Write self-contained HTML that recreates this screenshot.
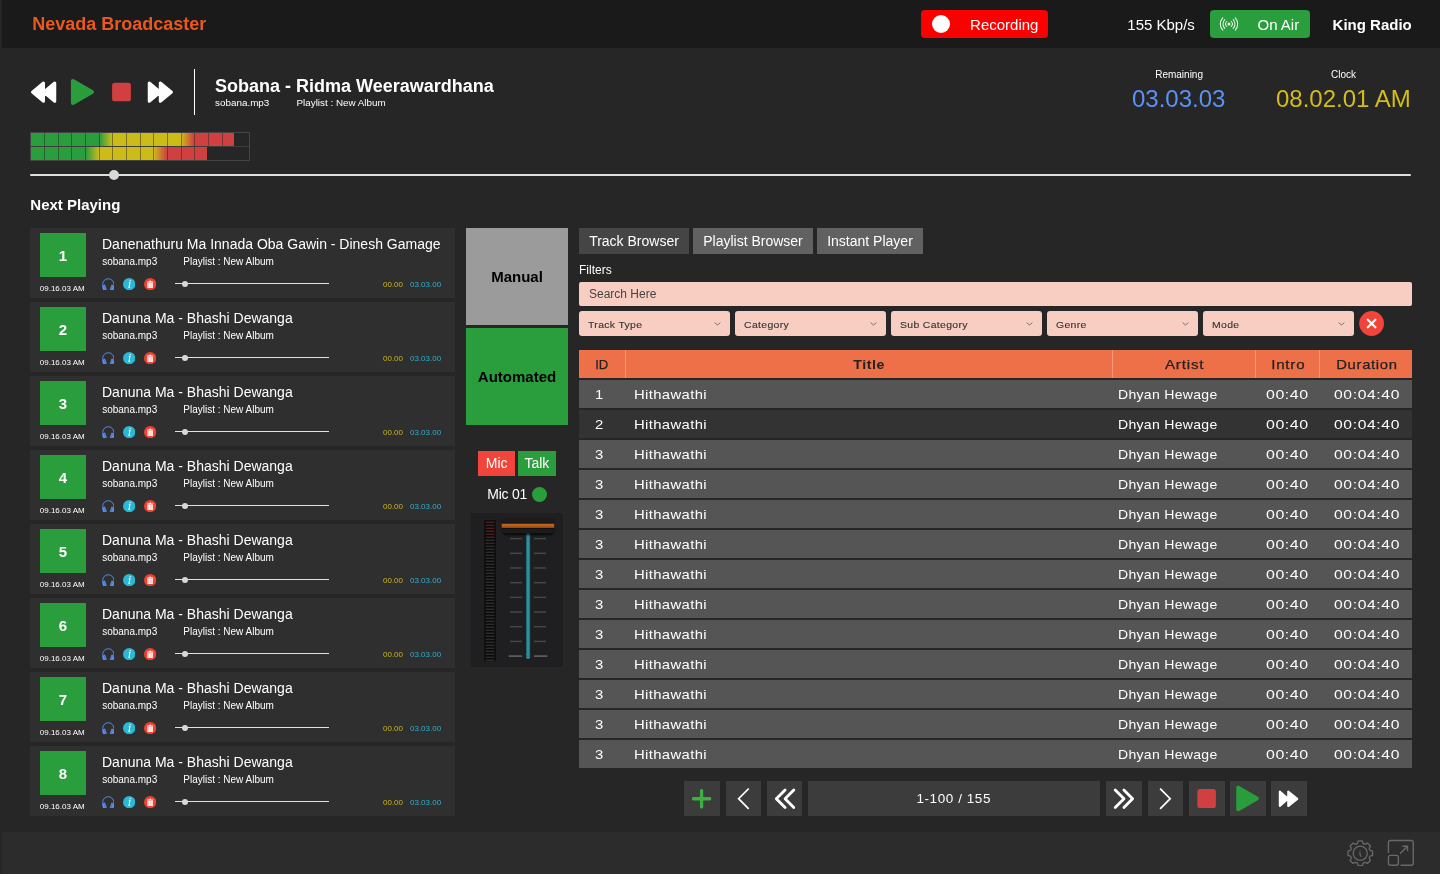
<!DOCTYPE html>
<html><head><meta charset="utf-8"><title>Nevada Broadcaster</title><style>
*{box-sizing:border-box;margin:0;padding:0}
html,body{width:1440px;height:874px;overflow:hidden;background:#262626;font-family:"Liberation Sans",sans-serif;color:#fff}
#app{position:absolute;left:0;top:0;width:1440px;height:874px;will-change:transform}
.abs{position:absolute}
#hdr{position:absolute;left:2px;top:0;width:1438px;height:48px;background:#1a1a1a}
#ftr{position:absolute;left:2px;top:832px;width:1438px;height:42px;background:#2c2c2c}
.t{position:absolute;white-space:nowrap;line-height:1}
.card{position:absolute;left:30px;width:425px;height:70px;background:#2f2f2f}
.num{position:absolute;left:9.800px;top:5px;width:46.300px;height:44px;background:#2a9d3c;color:#fff;font-weight:bold;font-size:15px;text-align:center;line-height:45.500px}
.tab{position:absolute;top:228px;height:26px;font-size:14px;line-height:26px;text-align:center;color:#fff}
.dd{position:absolute;top:311.100px;width:151px;height:24.800px;background:#f9cec2;border-radius:3px}
.row{position:absolute;left:579px;width:833px;height:28px;background:#555;font-size:13.500px;line-height:30.200px;color:#fff}
.row span{position:absolute;top:0;white-space:nowrap}
.pb{position:absolute;top:781px;width:35px;height:34.900px;background:#3c3c3c}
</style></head><body><div id="app">
<div id="hdr"></div>
<div class="t" style="left:32.20px;top:15.26px;font-size:18px;font-weight:bold;color:#e9581f">Nevada Broadcaster</div>
<div class="abs" style="left:921.200px;top:10px;width:127.300px;height:28px;background:#fb0000;border-radius:4px"></div>
<div class="abs" style="left:931.800px;top:15px;width:18px;height:18px;background:#fff;border-radius:50%"></div>
<div class="t" style="left:970.10px;top:17.30px;font-size:15px;">Recording</div>
<div class="t" style="left:1127.30px;top:16.80px;font-size:15px;">155 Kbp/s</div>
<div class="abs" style="left:1209.5px;top:10px;width:100px;height:28px;background:#2a9d3c;border-radius:4px"></div>
<svg class="abs" style="left:1218.6px;top:15px" width="20" height="18" viewBox="1 0 20 18" fill="none" stroke="#e6f4e8" stroke-width="1.05" stroke-linecap="round"><circle cx="11" cy="9" r="1.5" fill="#f2faf3" stroke="none"/><path d="M8.7 6.5a3.6 3.6 0 0 0 0 5M13.3 6.5a3.6 3.6 0 0 1 0 5M6.8 4.6a6.3 6.3 0 0 0 0 8.800M15.2 4.6a6.3 6.3 0 0 1 0 8.800M4.8 2.800a9 9 0 0 0 0 12.400M17.2 2.800a9 9 0 0 1 0 12.400"/></svg>
<div class="t" style="left:1257.50px;top:16.80px;font-size:15px;">On Air</div>
<div class="t" style="left:1332.60px;top:16.80px;font-size:15px;font-weight:bold">King Radio</div>
<svg class="abs" style="left:28px;top:76px" width="150" height="32" viewBox="28 76 150 32"><path d="M43.5 83 L43.5 101.250 L32.500 92.100 Z M54.750 83 L54.750 101.250 L43.700 92.100 Z" fill="#fff" stroke="#fff" stroke-width="3" stroke-linejoin="round"/><path d="M72.9 81 L72.9 103 L92 92 Z" fill="#2a9d3c" stroke="#2a9d3c" stroke-width="4" stroke-linejoin="round"/><rect x="112.100" y="82.750" width="18.800" height="18.500" rx="2.600" fill="#d04040"/><path d="M149.250 83 L149.250 101.250 L160.300 92.100 Z M160.300 83 L160.300 101.250 L171.500 92.100 Z" fill="#fff" stroke="#fff" stroke-width="3" stroke-linejoin="round"/></svg>
<div class="abs" style="left:193.750px;top:69px;width:1.300px;height:46px;background:#fff"></div>
<div class="t" style="left:215.00px;top:77.26px;font-size:18px;font-weight:bold">Sobana - Ridma Weerawardhana</div>
<div class="t" style="left:215.00px;top:98.12px;font-size:9.9px;">sobana.mp3</div>
<div class="t" style="left:296.50px;top:98.16px;font-size:9.85px;">Playlist : New Album</div>
<div class="t" style="left:979.10px;top:69.53px;width:400px;text-align:center;font-size:10px;">Remaining</div>
<div class="t" style="left:1132.00px;top:86.68px;font-size:24px;color:#5b92f5">03.03.03</div>
<div class="t" style="left:1143.50px;top:69.53px;width:400px;text-align:center;font-size:10px;">Clock</div>
<div class="t" style="left:1276.00px;top:86.68px;font-size:24px;color:#d4bc1a">08.02.01 AM</div>
<div class="abs" id="vu" style="left:30.2px;top:132.2px;width:220px;height:28.500px;border:1px solid #454545"></div>
<div class="abs" style="left:31px;top:133px;width:203px;height:13.300px;background:linear-gradient(90deg,#2a9d3c 0,#2a9d3c 68.5px,#cdbb1a 81px,#cdbb1a 150px,#d04040 163px,#d04040 100%)"></div>
<div class="abs" style="left:31px;top:147px;width:176px;height:13px;background:linear-gradient(90deg,#2a9d3c 0,#2a9d3c 55px,#cdbb1a 68px,#cdbb1a 122.500px,#d04040 136px,#d04040 100%)"></div>
<div class="abs" style="left:31px;top:146.200px;width:218.400px;height:1px;background:#3c3c3c"></div>
<div class="abs" style="left:43.87px;top:133px;width:1px;height:13.200px;background:rgba(30,30,30,.45)"></div>
<div class="abs" style="left:57.54px;top:133px;width:1px;height:13.200px;background:rgba(30,30,30,.45)"></div>
<div class="abs" style="left:71.21px;top:133px;width:1px;height:13.200px;background:rgba(30,30,30,.45)"></div>
<div class="abs" style="left:84.88px;top:133px;width:1px;height:13.200px;background:rgba(30,30,30,.45)"></div>
<div class="abs" style="left:98.55px;top:133px;width:1px;height:13.200px;background:rgba(30,30,30,.45)"></div>
<div class="abs" style="left:112.22px;top:133px;width:1px;height:13.200px;background:rgba(30,30,30,.45)"></div>
<div class="abs" style="left:125.89px;top:133px;width:1px;height:13.200px;background:rgba(30,30,30,.45)"></div>
<div class="abs" style="left:139.56px;top:133px;width:1px;height:13.200px;background:rgba(30,30,30,.45)"></div>
<div class="abs" style="left:153.23px;top:133px;width:1px;height:13.200px;background:rgba(30,30,30,.45)"></div>
<div class="abs" style="left:166.90px;top:133px;width:1px;height:13.200px;background:rgba(30,30,30,.45)"></div>
<div class="abs" style="left:180.57px;top:133px;width:1px;height:13.200px;background:rgba(30,30,30,.45)"></div>
<div class="abs" style="left:194.24px;top:133px;width:1px;height:13.200px;background:rgba(30,30,30,.45)"></div>
<div class="abs" style="left:207.91px;top:133px;width:1px;height:13.200px;background:rgba(30,30,30,.45)"></div>
<div class="abs" style="left:221.58px;top:133px;width:1px;height:13.200px;background:rgba(30,30,30,.45)"></div>
<div class="abs" style="left:43.87px;top:147px;width:1px;height:13px;background:rgba(30,30,30,.45)"></div>
<div class="abs" style="left:57.54px;top:147px;width:1px;height:13px;background:rgba(30,30,30,.45)"></div>
<div class="abs" style="left:71.21px;top:147px;width:1px;height:13px;background:rgba(30,30,30,.45)"></div>
<div class="abs" style="left:84.88px;top:147px;width:1px;height:13px;background:rgba(30,30,30,.45)"></div>
<div class="abs" style="left:98.55px;top:147px;width:1px;height:13px;background:rgba(30,30,30,.45)"></div>
<div class="abs" style="left:112.22px;top:147px;width:1px;height:13px;background:rgba(30,30,30,.45)"></div>
<div class="abs" style="left:125.89px;top:147px;width:1px;height:13px;background:rgba(30,30,30,.45)"></div>
<div class="abs" style="left:139.56px;top:147px;width:1px;height:13px;background:rgba(30,30,30,.45)"></div>
<div class="abs" style="left:153.23px;top:147px;width:1px;height:13px;background:rgba(30,30,30,.45)"></div>
<div class="abs" style="left:166.90px;top:147px;width:1px;height:13px;background:rgba(30,30,30,.45)"></div>
<div class="abs" style="left:180.57px;top:147px;width:1px;height:13px;background:rgba(30,30,30,.45)"></div>
<div class="abs" style="left:194.24px;top:147px;width:1px;height:13px;background:rgba(30,30,30,.45)"></div>
<div class="abs" style="left:30.300px;top:173.800px;width:1381px;height:2.400px;background:#e0e0e0;border-radius:1px"></div>
<div class="abs" style="left:109px;top:170px;width:10px;height:10px;border-radius:50%;background:#d9d9d9"></div>
<div class="t" style="left:30.30px;top:197.30px;font-size:15px;font-weight:bold">Next Playing</div>
<div class="card" style="top:228px">
<div class="num">1</div>
<div class="t" style="left:9.80px;top:57.03px;font-size:8px;">09.16.03 AM</div>
<div class="t" style="left:72.00px;top:9.35px;font-size:14px;">Danenathuru Ma Innada Oba Gawin - Dinesh Gamage</div>
<div class="t" style="left:72.20px;top:29.14px;font-size:10px;">sobana.mp3</div>
<div class="t" style="left:153.30px;top:29.14px;font-size:10px;">Playlist : New Album</div>
<svg class="abs" style="left:71.700px;top:49.700px" width="12.600" height="12.600" viewBox="0 0 12.600 12.600" fill="none"><path d="M.75 9V6.300a5.550 5.550 0 0 1 11.100 0V9" stroke="#5b8def" stroke-width=".950"/><path d="M.5 8.500Q1.400 6.700 2.900 6.600L4.800 11.300Q3.500 12.900 1.200 12.300Q.3 10.500 .5 8.500Z" fill="#5b8def"/><path d="M12.100 8.500Q11.200 6.700 9.700 6.600L7.800 11.300Q9.100 12.900 11.400 12.300Q12.300 10.500 12.100 8.500Z" fill="#5b8def"/><path d="M2.300 8.300L3.400 11.300M10.300 8.300L9.200 11.300" stroke="#3e6bc8" stroke-width=".7" stroke-linecap="round"/></svg><svg class="abs" style="left:92.800px;top:49.800px" width="12.400" height="12.400" viewBox="0 0 12.400 12.400"><circle cx="6.200" cy="6.200" r="6.150" fill="#29b8d6"/><text x="6.500" y="10.300" font-family="Liberation Serif" font-style="italic" font-size="12.500" fill="#fff" text-anchor="middle">i</text></svg><svg class="abs" style="left:113.900px;top:49.800px" width="12.400" height="12.400" viewBox="0 0 12.400 12.400"><circle cx="6.200" cy="6.200" r="6.150" fill="#f04030"/><path d="M3.100 4.200V3.500h2.300l.3-.9h1l.3.900h2.300v.7z" fill="#fff"/><path d="M3.300 4.500h5.800l-.2 5.500H3.500z" fill="#fff"/><path d="M4.400 5v4.300M6.200 5v4.300M8 5v4.300" stroke="#f04030" stroke-opacity=".55" stroke-width=".6"/></svg>
<div class="abs" style="left:145px;top:54.800px;width:154px;height:1.200px;background:#e0e0e0"></div>
<div class="abs" style="left:151.500px;top:52.700px;width:6.500px;height:6.500px;border-radius:50%;background:#d8d8d8"></div>
<div class="t" style="left:353.00px;top:52.53px;font-size:8px;color:#c6b621">00.00</div>
<div class="t" style="left:380.00px;top:52.53px;font-size:8px;color:#34adc9">03.03.00</div>
</div>
<div class="card" style="top:302px">
<div class="num">2</div>
<div class="t" style="left:9.80px;top:57.03px;font-size:8px;">09.16.03 AM</div>
<div class="t" style="left:72.00px;top:9.35px;font-size:14px;">Danuna Ma - Bhashi Dewanga</div>
<div class="t" style="left:72.20px;top:29.14px;font-size:10px;">sobana.mp3</div>
<div class="t" style="left:153.30px;top:29.14px;font-size:10px;">Playlist : New Album</div>
<svg class="abs" style="left:71.700px;top:49.700px" width="12.600" height="12.600" viewBox="0 0 12.600 12.600" fill="none"><path d="M.75 9V6.300a5.550 5.550 0 0 1 11.100 0V9" stroke="#5b8def" stroke-width=".950"/><path d="M.5 8.500Q1.400 6.700 2.900 6.600L4.800 11.300Q3.500 12.900 1.200 12.300Q.3 10.500 .5 8.500Z" fill="#5b8def"/><path d="M12.100 8.500Q11.200 6.700 9.700 6.600L7.800 11.300Q9.100 12.900 11.400 12.300Q12.300 10.500 12.100 8.500Z" fill="#5b8def"/><path d="M2.300 8.300L3.400 11.300M10.300 8.300L9.200 11.300" stroke="#3e6bc8" stroke-width=".7" stroke-linecap="round"/></svg><svg class="abs" style="left:92.800px;top:49.800px" width="12.400" height="12.400" viewBox="0 0 12.400 12.400"><circle cx="6.200" cy="6.200" r="6.150" fill="#29b8d6"/><text x="6.500" y="10.300" font-family="Liberation Serif" font-style="italic" font-size="12.500" fill="#fff" text-anchor="middle">i</text></svg><svg class="abs" style="left:113.900px;top:49.800px" width="12.400" height="12.400" viewBox="0 0 12.400 12.400"><circle cx="6.200" cy="6.200" r="6.150" fill="#f04030"/><path d="M3.100 4.200V3.500h2.300l.3-.9h1l.3.900h2.300v.7z" fill="#fff"/><path d="M3.300 4.500h5.800l-.2 5.500H3.500z" fill="#fff"/><path d="M4.400 5v4.300M6.200 5v4.300M8 5v4.300" stroke="#f04030" stroke-opacity=".55" stroke-width=".6"/></svg>
<div class="abs" style="left:145px;top:54.800px;width:154px;height:1.200px;background:#e0e0e0"></div>
<div class="abs" style="left:151.500px;top:52.700px;width:6.500px;height:6.500px;border-radius:50%;background:#d8d8d8"></div>
<div class="t" style="left:353.00px;top:52.53px;font-size:8px;color:#c6b621">00.00</div>
<div class="t" style="left:380.00px;top:52.53px;font-size:8px;color:#34adc9">03.03.00</div>
</div>
<div class="card" style="top:376px">
<div class="num">3</div>
<div class="t" style="left:9.80px;top:57.03px;font-size:8px;">09.16.03 AM</div>
<div class="t" style="left:72.00px;top:9.35px;font-size:14px;">Danuna Ma - Bhashi Dewanga</div>
<div class="t" style="left:72.20px;top:29.14px;font-size:10px;">sobana.mp3</div>
<div class="t" style="left:153.30px;top:29.14px;font-size:10px;">Playlist : New Album</div>
<svg class="abs" style="left:71.700px;top:49.700px" width="12.600" height="12.600" viewBox="0 0 12.600 12.600" fill="none"><path d="M.75 9V6.300a5.550 5.550 0 0 1 11.100 0V9" stroke="#5b8def" stroke-width=".950"/><path d="M.5 8.500Q1.400 6.700 2.900 6.600L4.800 11.300Q3.500 12.900 1.200 12.300Q.3 10.500 .5 8.500Z" fill="#5b8def"/><path d="M12.100 8.500Q11.200 6.700 9.700 6.600L7.800 11.300Q9.100 12.900 11.400 12.300Q12.300 10.500 12.100 8.500Z" fill="#5b8def"/><path d="M2.300 8.300L3.400 11.300M10.300 8.300L9.200 11.300" stroke="#3e6bc8" stroke-width=".7" stroke-linecap="round"/></svg><svg class="abs" style="left:92.800px;top:49.800px" width="12.400" height="12.400" viewBox="0 0 12.400 12.400"><circle cx="6.200" cy="6.200" r="6.150" fill="#29b8d6"/><text x="6.500" y="10.300" font-family="Liberation Serif" font-style="italic" font-size="12.500" fill="#fff" text-anchor="middle">i</text></svg><svg class="abs" style="left:113.900px;top:49.800px" width="12.400" height="12.400" viewBox="0 0 12.400 12.400"><circle cx="6.200" cy="6.200" r="6.150" fill="#f04030"/><path d="M3.100 4.200V3.500h2.300l.3-.9h1l.3.900h2.300v.7z" fill="#fff"/><path d="M3.300 4.500h5.800l-.2 5.500H3.500z" fill="#fff"/><path d="M4.400 5v4.300M6.200 5v4.300M8 5v4.300" stroke="#f04030" stroke-opacity=".55" stroke-width=".6"/></svg>
<div class="abs" style="left:145px;top:54.800px;width:154px;height:1.200px;background:#e0e0e0"></div>
<div class="abs" style="left:151.500px;top:52.700px;width:6.500px;height:6.500px;border-radius:50%;background:#d8d8d8"></div>
<div class="t" style="left:353.00px;top:52.53px;font-size:8px;color:#c6b621">00.00</div>
<div class="t" style="left:380.00px;top:52.53px;font-size:8px;color:#34adc9">03.03.00</div>
</div>
<div class="card" style="top:450px">
<div class="num">4</div>
<div class="t" style="left:9.80px;top:57.03px;font-size:8px;">09.16.03 AM</div>
<div class="t" style="left:72.00px;top:9.35px;font-size:14px;">Danuna Ma - Bhashi Dewanga</div>
<div class="t" style="left:72.20px;top:29.14px;font-size:10px;">sobana.mp3</div>
<div class="t" style="left:153.30px;top:29.14px;font-size:10px;">Playlist : New Album</div>
<svg class="abs" style="left:71.700px;top:49.700px" width="12.600" height="12.600" viewBox="0 0 12.600 12.600" fill="none"><path d="M.75 9V6.300a5.550 5.550 0 0 1 11.100 0V9" stroke="#5b8def" stroke-width=".950"/><path d="M.5 8.500Q1.400 6.700 2.900 6.600L4.800 11.300Q3.500 12.900 1.200 12.300Q.3 10.500 .5 8.500Z" fill="#5b8def"/><path d="M12.100 8.500Q11.200 6.700 9.700 6.600L7.800 11.300Q9.100 12.900 11.400 12.300Q12.300 10.500 12.100 8.500Z" fill="#5b8def"/><path d="M2.300 8.300L3.400 11.300M10.300 8.300L9.200 11.300" stroke="#3e6bc8" stroke-width=".7" stroke-linecap="round"/></svg><svg class="abs" style="left:92.800px;top:49.800px" width="12.400" height="12.400" viewBox="0 0 12.400 12.400"><circle cx="6.200" cy="6.200" r="6.150" fill="#29b8d6"/><text x="6.500" y="10.300" font-family="Liberation Serif" font-style="italic" font-size="12.500" fill="#fff" text-anchor="middle">i</text></svg><svg class="abs" style="left:113.900px;top:49.800px" width="12.400" height="12.400" viewBox="0 0 12.400 12.400"><circle cx="6.200" cy="6.200" r="6.150" fill="#f04030"/><path d="M3.100 4.200V3.500h2.300l.3-.9h1l.3.900h2.300v.7z" fill="#fff"/><path d="M3.300 4.500h5.800l-.2 5.500H3.500z" fill="#fff"/><path d="M4.400 5v4.300M6.200 5v4.300M8 5v4.300" stroke="#f04030" stroke-opacity=".55" stroke-width=".6"/></svg>
<div class="abs" style="left:145px;top:54.800px;width:154px;height:1.200px;background:#e0e0e0"></div>
<div class="abs" style="left:151.500px;top:52.700px;width:6.500px;height:6.500px;border-radius:50%;background:#d8d8d8"></div>
<div class="t" style="left:353.00px;top:52.53px;font-size:8px;color:#c6b621">00.00</div>
<div class="t" style="left:380.00px;top:52.53px;font-size:8px;color:#34adc9">03.03.00</div>
</div>
<div class="card" style="top:524px">
<div class="num">5</div>
<div class="t" style="left:9.80px;top:57.03px;font-size:8px;">09.16.03 AM</div>
<div class="t" style="left:72.00px;top:9.35px;font-size:14px;">Danuna Ma - Bhashi Dewanga</div>
<div class="t" style="left:72.20px;top:29.14px;font-size:10px;">sobana.mp3</div>
<div class="t" style="left:153.30px;top:29.14px;font-size:10px;">Playlist : New Album</div>
<svg class="abs" style="left:71.700px;top:49.700px" width="12.600" height="12.600" viewBox="0 0 12.600 12.600" fill="none"><path d="M.75 9V6.300a5.550 5.550 0 0 1 11.100 0V9" stroke="#5b8def" stroke-width=".950"/><path d="M.5 8.500Q1.400 6.700 2.900 6.600L4.800 11.300Q3.500 12.900 1.200 12.300Q.3 10.500 .5 8.500Z" fill="#5b8def"/><path d="M12.100 8.500Q11.200 6.700 9.700 6.600L7.800 11.300Q9.100 12.900 11.400 12.300Q12.300 10.500 12.100 8.500Z" fill="#5b8def"/><path d="M2.300 8.300L3.400 11.300M10.300 8.300L9.200 11.300" stroke="#3e6bc8" stroke-width=".7" stroke-linecap="round"/></svg><svg class="abs" style="left:92.800px;top:49.800px" width="12.400" height="12.400" viewBox="0 0 12.400 12.400"><circle cx="6.200" cy="6.200" r="6.150" fill="#29b8d6"/><text x="6.500" y="10.300" font-family="Liberation Serif" font-style="italic" font-size="12.500" fill="#fff" text-anchor="middle">i</text></svg><svg class="abs" style="left:113.900px;top:49.800px" width="12.400" height="12.400" viewBox="0 0 12.400 12.400"><circle cx="6.200" cy="6.200" r="6.150" fill="#f04030"/><path d="M3.100 4.200V3.500h2.300l.3-.9h1l.3.900h2.300v.7z" fill="#fff"/><path d="M3.300 4.500h5.800l-.2 5.500H3.500z" fill="#fff"/><path d="M4.400 5v4.300M6.200 5v4.300M8 5v4.300" stroke="#f04030" stroke-opacity=".55" stroke-width=".6"/></svg>
<div class="abs" style="left:145px;top:54.800px;width:154px;height:1.200px;background:#e0e0e0"></div>
<div class="abs" style="left:151.500px;top:52.700px;width:6.500px;height:6.500px;border-radius:50%;background:#d8d8d8"></div>
<div class="t" style="left:353.00px;top:52.53px;font-size:8px;color:#c6b621">00.00</div>
<div class="t" style="left:380.00px;top:52.53px;font-size:8px;color:#34adc9">03.03.00</div>
</div>
<div class="card" style="top:598px">
<div class="num">6</div>
<div class="t" style="left:9.80px;top:57.03px;font-size:8px;">09.16.03 AM</div>
<div class="t" style="left:72.00px;top:9.35px;font-size:14px;">Danuna Ma - Bhashi Dewanga</div>
<div class="t" style="left:72.20px;top:29.14px;font-size:10px;">sobana.mp3</div>
<div class="t" style="left:153.30px;top:29.14px;font-size:10px;">Playlist : New Album</div>
<svg class="abs" style="left:71.700px;top:49.700px" width="12.600" height="12.600" viewBox="0 0 12.600 12.600" fill="none"><path d="M.75 9V6.300a5.550 5.550 0 0 1 11.100 0V9" stroke="#5b8def" stroke-width=".950"/><path d="M.5 8.500Q1.400 6.700 2.900 6.600L4.800 11.300Q3.500 12.900 1.200 12.300Q.3 10.500 .5 8.500Z" fill="#5b8def"/><path d="M12.100 8.500Q11.200 6.700 9.700 6.600L7.800 11.300Q9.100 12.900 11.400 12.300Q12.300 10.500 12.100 8.500Z" fill="#5b8def"/><path d="M2.300 8.300L3.400 11.300M10.300 8.300L9.200 11.300" stroke="#3e6bc8" stroke-width=".7" stroke-linecap="round"/></svg><svg class="abs" style="left:92.800px;top:49.800px" width="12.400" height="12.400" viewBox="0 0 12.400 12.400"><circle cx="6.200" cy="6.200" r="6.150" fill="#29b8d6"/><text x="6.500" y="10.300" font-family="Liberation Serif" font-style="italic" font-size="12.500" fill="#fff" text-anchor="middle">i</text></svg><svg class="abs" style="left:113.900px;top:49.800px" width="12.400" height="12.400" viewBox="0 0 12.400 12.400"><circle cx="6.200" cy="6.200" r="6.150" fill="#f04030"/><path d="M3.100 4.200V3.500h2.300l.3-.9h1l.3.900h2.300v.7z" fill="#fff"/><path d="M3.300 4.500h5.800l-.2 5.500H3.500z" fill="#fff"/><path d="M4.400 5v4.300M6.200 5v4.300M8 5v4.300" stroke="#f04030" stroke-opacity=".55" stroke-width=".6"/></svg>
<div class="abs" style="left:145px;top:54.800px;width:154px;height:1.200px;background:#e0e0e0"></div>
<div class="abs" style="left:151.500px;top:52.700px;width:6.500px;height:6.500px;border-radius:50%;background:#d8d8d8"></div>
<div class="t" style="left:353.00px;top:52.53px;font-size:8px;color:#c6b621">00.00</div>
<div class="t" style="left:380.00px;top:52.53px;font-size:8px;color:#34adc9">03.03.00</div>
</div>
<div class="card" style="top:672px">
<div class="num">7</div>
<div class="t" style="left:9.80px;top:57.03px;font-size:8px;">09.16.03 AM</div>
<div class="t" style="left:72.00px;top:9.35px;font-size:14px;">Danuna Ma - Bhashi Dewanga</div>
<div class="t" style="left:72.20px;top:29.14px;font-size:10px;">sobana.mp3</div>
<div class="t" style="left:153.30px;top:29.14px;font-size:10px;">Playlist : New Album</div>
<svg class="abs" style="left:71.700px;top:49.700px" width="12.600" height="12.600" viewBox="0 0 12.600 12.600" fill="none"><path d="M.75 9V6.300a5.550 5.550 0 0 1 11.100 0V9" stroke="#5b8def" stroke-width=".950"/><path d="M.5 8.500Q1.400 6.700 2.900 6.600L4.800 11.300Q3.500 12.900 1.200 12.300Q.3 10.500 .5 8.500Z" fill="#5b8def"/><path d="M12.100 8.500Q11.200 6.700 9.700 6.600L7.800 11.300Q9.100 12.900 11.400 12.300Q12.300 10.500 12.100 8.500Z" fill="#5b8def"/><path d="M2.300 8.300L3.400 11.300M10.300 8.300L9.200 11.300" stroke="#3e6bc8" stroke-width=".7" stroke-linecap="round"/></svg><svg class="abs" style="left:92.800px;top:49.800px" width="12.400" height="12.400" viewBox="0 0 12.400 12.400"><circle cx="6.200" cy="6.200" r="6.150" fill="#29b8d6"/><text x="6.500" y="10.300" font-family="Liberation Serif" font-style="italic" font-size="12.500" fill="#fff" text-anchor="middle">i</text></svg><svg class="abs" style="left:113.900px;top:49.800px" width="12.400" height="12.400" viewBox="0 0 12.400 12.400"><circle cx="6.200" cy="6.200" r="6.150" fill="#f04030"/><path d="M3.100 4.200V3.500h2.300l.3-.9h1l.3.900h2.300v.7z" fill="#fff"/><path d="M3.300 4.500h5.800l-.2 5.500H3.500z" fill="#fff"/><path d="M4.400 5v4.300M6.200 5v4.300M8 5v4.300" stroke="#f04030" stroke-opacity=".55" stroke-width=".6"/></svg>
<div class="abs" style="left:145px;top:54.800px;width:154px;height:1.200px;background:#e0e0e0"></div>
<div class="abs" style="left:151.500px;top:52.700px;width:6.500px;height:6.500px;border-radius:50%;background:#d8d8d8"></div>
<div class="t" style="left:353.00px;top:52.53px;font-size:8px;color:#c6b621">00.00</div>
<div class="t" style="left:380.00px;top:52.53px;font-size:8px;color:#34adc9">03.03.00</div>
</div>
<div class="card" style="top:746px">
<div class="num">8</div>
<div class="t" style="left:9.80px;top:57.03px;font-size:8px;">09.16.03 AM</div>
<div class="t" style="left:72.00px;top:9.35px;font-size:14px;">Danuna Ma - Bhashi Dewanga</div>
<div class="t" style="left:72.20px;top:29.14px;font-size:10px;">sobana.mp3</div>
<div class="t" style="left:153.30px;top:29.14px;font-size:10px;">Playlist : New Album</div>
<svg class="abs" style="left:71.700px;top:49.700px" width="12.600" height="12.600" viewBox="0 0 12.600 12.600" fill="none"><path d="M.75 9V6.300a5.550 5.550 0 0 1 11.100 0V9" stroke="#5b8def" stroke-width=".950"/><path d="M.5 8.500Q1.400 6.700 2.900 6.600L4.800 11.300Q3.500 12.900 1.200 12.300Q.3 10.500 .5 8.500Z" fill="#5b8def"/><path d="M12.100 8.500Q11.200 6.700 9.700 6.600L7.800 11.300Q9.100 12.900 11.400 12.300Q12.300 10.500 12.100 8.500Z" fill="#5b8def"/><path d="M2.300 8.300L3.400 11.300M10.300 8.300L9.200 11.300" stroke="#3e6bc8" stroke-width=".7" stroke-linecap="round"/></svg><svg class="abs" style="left:92.800px;top:49.800px" width="12.400" height="12.400" viewBox="0 0 12.400 12.400"><circle cx="6.200" cy="6.200" r="6.150" fill="#29b8d6"/><text x="6.500" y="10.300" font-family="Liberation Serif" font-style="italic" font-size="12.500" fill="#fff" text-anchor="middle">i</text></svg><svg class="abs" style="left:113.900px;top:49.800px" width="12.400" height="12.400" viewBox="0 0 12.400 12.400"><circle cx="6.200" cy="6.200" r="6.150" fill="#f04030"/><path d="M3.100 4.200V3.500h2.300l.3-.9h1l.3.900h2.300v.7z" fill="#fff"/><path d="M3.300 4.500h5.800l-.2 5.500H3.500z" fill="#fff"/><path d="M4.400 5v4.300M6.200 5v4.300M8 5v4.300" stroke="#f04030" stroke-opacity=".55" stroke-width=".6"/></svg>
<div class="abs" style="left:145px;top:54.800px;width:154px;height:1.200px;background:#e0e0e0"></div>
<div class="abs" style="left:151.500px;top:52.700px;width:6.500px;height:6.500px;border-radius:50%;background:#d8d8d8"></div>
<div class="t" style="left:353.00px;top:52.53px;font-size:8px;color:#c6b621">00.00</div>
<div class="t" style="left:380.00px;top:52.53px;font-size:8px;color:#34adc9">03.03.00</div>
</div>
<div class="abs" style="left:466px;top:228px;width:102px;height:97px;background:#9b9b9b;color:#000;font-weight:bold;font-size:15px;text-align:center;line-height:97px">Manual</div>
<div class="abs" style="left:466px;top:328px;width:102px;height:97px;background:#2a9d3c;color:#000;font-weight:bold;font-size:15px;text-align:center;line-height:97px">Automated</div>
<div class="abs" style="left:478.400px;top:451.400px;width:36.500px;height:24.300px;background:#f1443a;font-size:14px;line-height:24.300px;text-align:center">Mic</div>
<div class="abs" style="left:518.200px;top:451.400px;width:37.400px;height:24.300px;background:#2a9d3c;font-size:14px;line-height:24.300px;text-align:center">Talk</div>
<div class="t" style="left:487.30px;top:487.15px;font-size:14px;letter-spacing:-.25px">Mic 01</div>
<div class="abs" style="left:532px;top:486.500px;width:15px;height:15px;border-radius:50%;background:#2a9d3c"></div>
<svg id="fader" class="abs" style="left:471px;top:513px" width="92" height="154" viewBox="471 513 92 154"><defs><linearGradient id="og" x1="0" y1="0" x2="0" y2="1"><stop offset="0" stop-color="#cc6c20"/><stop offset=".5" stop-color="#b65a1a"/><stop offset="1" stop-color="#874012"/></linearGradient><linearGradient id="tg" x1="0" y1="0" x2="1" y2="0"><stop offset="0" stop-color="#1c5560"/><stop offset=".3" stop-color="#2d8f9e"/><stop offset=".7" stop-color="#2d8f9e"/><stop offset="1" stop-color="#1c5560"/></linearGradient><filter id="sh" x="-20%" y="-50%" width="140%" height="220%"><feGaussianBlur stdDeviation="1.300"/></filter></defs><rect x="471" y="513" width="92" height="154" fill="#1f1f21"/><rect x="484.200" y="520.200" width="11.600" height="141" fill="#0b0b0b"/><rect x="485.500" y="521.60" width="9" height="1.300" fill="#521e1e"/><rect x="485.500" y="524.60" width="9" height="1.300" fill="#521e1e"/><rect x="485.500" y="527.60" width="9" height="1.300" fill="#521e1e"/><rect x="485.500" y="530.60" width="9" height="1.300" fill="#521e1e"/><rect x="485.500" y="533.60" width="9" height="1.300" fill="#521e1e"/><rect x="485.500" y="536.60" width="9" height="1.300" fill="#521e1e"/><rect x="485.500" y="539.60" width="9" height="1.300" fill="#2f2f2f"/><rect x="485.500" y="542.60" width="9" height="1.300" fill="#2f2f2f"/><rect x="485.500" y="545.60" width="9" height="1.300" fill="#2f2f2f"/><rect x="485.500" y="548.60" width="9" height="1.300" fill="#2f2f2f"/><rect x="485.500" y="551.60" width="9" height="1.300" fill="#2f2f2f"/><rect x="485.500" y="554.60" width="9" height="1.300" fill="#2f2f2f"/><rect x="485.500" y="557.60" width="9" height="1.300" fill="#2f2f2f"/><rect x="485.500" y="560.60" width="9" height="1.300" fill="#2f2f2f"/><rect x="485.500" y="563.60" width="9" height="1.300" fill="#2f2f2f"/><rect x="485.500" y="566.60" width="9" height="1.300" fill="#2f2f2f"/><rect x="485.500" y="569.60" width="9" height="1.300" fill="#2f2f2f"/><rect x="485.500" y="572.60" width="9" height="1.300" fill="#2f2f2f"/><rect x="485.500" y="575.60" width="9" height="1.300" fill="#2f2f2f"/><rect x="485.500" y="578.60" width="9" height="1.300" fill="#2f2f2f"/><rect x="485.500" y="581.60" width="9" height="1.300" fill="#2f2f2f"/><rect x="485.500" y="584.60" width="9" height="1.300" fill="#2f2f2f"/><rect x="485.500" y="587.60" width="9" height="1.300" fill="#2f2f2f"/><rect x="485.500" y="590.60" width="9" height="1.300" fill="#2f2f2f"/><rect x="485.500" y="593.60" width="9" height="1.300" fill="#2f2f2f"/><rect x="485.500" y="596.60" width="9" height="1.300" fill="#2f2f2f"/><rect x="485.500" y="599.60" width="9" height="1.300" fill="#2f2f2f"/><rect x="485.500" y="602.60" width="9" height="1.300" fill="#2f2f2f"/><rect x="485.500" y="605.60" width="9" height="1.300" fill="#2f2f2f"/><rect x="485.500" y="608.60" width="9" height="1.300" fill="#2f2f2f"/><rect x="485.500" y="611.60" width="9" height="1.300" fill="#2f2f2f"/><rect x="485.500" y="614.60" width="9" height="1.300" fill="#2f2f2f"/><rect x="485.500" y="617.60" width="9" height="1.300" fill="#2f2f2f"/><rect x="485.500" y="620.60" width="9" height="1.300" fill="#2f2f2f"/><rect x="485.500" y="623.60" width="9" height="1.300" fill="#2f2f2f"/><rect x="485.500" y="626.60" width="9" height="1.300" fill="#2f2f2f"/><rect x="485.500" y="629.60" width="9" height="1.300" fill="#2f2f2f"/><rect x="485.500" y="632.60" width="9" height="1.300" fill="#2f2f2f"/><rect x="485.500" y="635.60" width="9" height="1.300" fill="#2f2f2f"/><rect x="485.500" y="638.60" width="9" height="1.300" fill="#2f2f2f"/><rect x="485.500" y="641.60" width="9" height="1.300" fill="#2f2f2f"/><rect x="485.500" y="644.60" width="9" height="1.300" fill="#2f2f2f"/><rect x="485.500" y="647.60" width="9" height="1.300" fill="#2f2f2f"/><rect x="485.500" y="650.60" width="9" height="1.300" fill="#2f2f2f"/><rect x="485.500" y="653.60" width="9" height="1.300" fill="#2f2f2f"/><rect x="485.500" y="656.60" width="9" height="1.300" fill="#2f2f2f"/><rect x="485.500" y="659.60" width="9" height="1.300" fill="#2f2f2f"/><rect x="510.100" y="537.85" width="12" height="1.500" fill="#464646"/><rect x="534" y="537.85" width="12" height="1.500" fill="#464646"/><rect x="510.100" y="552.54" width="12" height="1.500" fill="#464646"/><rect x="534" y="552.54" width="12" height="1.500" fill="#464646"/><rect x="510.100" y="567.23" width="12" height="1.500" fill="#464646"/><rect x="534" y="567.23" width="12" height="1.500" fill="#464646"/><rect x="510.100" y="581.92" width="12" height="1.500" fill="#464646"/><rect x="534" y="581.92" width="12" height="1.500" fill="#464646"/><rect x="510.100" y="596.61" width="12" height="1.500" fill="#464646"/><rect x="534" y="596.61" width="12" height="1.500" fill="#464646"/><rect x="510.100" y="611.30" width="12" height="1.500" fill="#464646"/><rect x="534" y="611.30" width="12" height="1.500" fill="#464646"/><rect x="510.100" y="625.99" width="12" height="1.500" fill="#464646"/><rect x="534" y="625.99" width="12" height="1.500" fill="#464646"/><rect x="510.100" y="640.68" width="12" height="1.500" fill="#464646"/><rect x="534" y="640.68" width="12" height="1.500" fill="#464646"/><rect x="508.800" y="655.27" width="13.300" height="1.700" fill="#5e5e5e"/><rect x="534" y="655.27" width="13.300" height="1.700" fill="#5e5e5e"/><rect x="526" y="530" width="4.200" height="128.700" rx="1" fill="url(#tg)"/><rect x="502.500" y="521" width="51" height="14" rx="3" fill="#000" opacity=".75" filter="url(#sh)"/><rect x="501.700" y="518.300" width="52.500" height="15" rx="2.500" fill="#1b1b1c"/><rect x="501.700" y="523.800" width="52.500" height="4.400" fill="url(#og)"/><rect x="501.700" y="528.200" width="52.500" height=".8" fill="#0c0c0c"/></svg>
<div class="tab" style="left:579px;width:110px;background:#454545">Track Browser</div>
<div class="tab" style="left:693px;width:120px;background:#616161">Playlist Browser</div>
<div class="tab" style="left:817px;width:106px;background:#616161">Instant Player</div>
<div class="t" style="left:579.00px;top:263.84px;font-size:12px;">Filters</div>
<div class="abs" style="left:579px;top:282px;width:833px;height:24px;background:#f9cec2;border-radius:2px"></div>
<div class="t" style="left:589.00px;top:287.94px;font-size:12px;color:#444">Search Here</div>
<div class="dd" style="left:579.1px"><svg class="abs" style="left:135px;top:10.700px" width="7" height="4.200" viewBox="0 0 7 4.200"><path d="M.6.600l2.900 2.400L6.400.6" fill="none" stroke="#666" stroke-width=".9"/></svg></div>
<div class="t" style="left:587.90px;top:320.16px;font-size:9.5px;color:#333;letter-spacing:.3px;-webkit-text-stroke:.12px #333;transform-origin:0 50%;transform:scaleX(1.1)">Track Type</div>
<div class="dd" style="left:735.1px"><svg class="abs" style="left:135px;top:10.700px" width="7" height="4.200" viewBox="0 0 7 4.200"><path d="M.6.600l2.900 2.400L6.400.6" fill="none" stroke="#666" stroke-width=".9"/></svg></div>
<div class="t" style="left:743.90px;top:320.16px;font-size:9.5px;color:#333;letter-spacing:.3px;-webkit-text-stroke:.12px #333;transform-origin:0 50%;transform:scaleX(1.1)">Category</div>
<div class="dd" style="left:891.1px"><svg class="abs" style="left:135px;top:10.700px" width="7" height="4.200" viewBox="0 0 7 4.200"><path d="M.6.600l2.900 2.400L6.400.6" fill="none" stroke="#666" stroke-width=".9"/></svg></div>
<div class="t" style="left:899.90px;top:320.16px;font-size:9.5px;color:#333;letter-spacing:.3px;-webkit-text-stroke:.12px #333;transform-origin:0 50%;transform:scaleX(1.1)">Sub Category</div>
<div class="dd" style="left:1047.1px"><svg class="abs" style="left:135px;top:10.700px" width="7" height="4.200" viewBox="0 0 7 4.200"><path d="M.6.600l2.900 2.400L6.400.6" fill="none" stroke="#666" stroke-width=".9"/></svg></div>
<div class="t" style="left:1055.90px;top:320.16px;font-size:9.5px;color:#333;letter-spacing:.3px;-webkit-text-stroke:.12px #333;transform-origin:0 50%;transform:scaleX(1.1)">Genre</div>
<div class="dd" style="left:1203.1px"><svg class="abs" style="left:135px;top:10.700px" width="7" height="4.200" viewBox="0 0 7 4.200"><path d="M.6.600l2.900 2.400L6.400.6" fill="none" stroke="#666" stroke-width=".9"/></svg></div>
<div class="t" style="left:1211.90px;top:320.16px;font-size:9.5px;color:#333;letter-spacing:.3px;-webkit-text-stroke:.12px #333;transform-origin:0 50%;transform:scaleX(1.1)">Mode</div>
<svg class="abs" style="left:1359px;top:311px" width="25" height="25" viewBox="0 0 25 25"><circle cx="12.600" cy="12.500" r="12.400" fill="#f1443a"/><path d="M8.800 8.700l7.600 7.600M16.400 8.700l-7.600 7.600" stroke="#fff" stroke-width="2.200" stroke-linecap="round"/></svg>
<div class="abs" style="left:579px;top:350px;width:833px;height:28px;background:#ee7048;color:#222;font-size:13.500px;line-height:29px;-webkit-text-stroke:.25px #222"><span class="abs" style="left:0;width:46px;text-align:center"><b style="display:inline-block;font-weight:inherit;transform:scaleX(0.97);letter-spacing:0px;margin-right:0px;">ID</b></span><span class="abs" style="left:46px;width:487.500px;height:28px;text-align:center;font-weight:bold;-webkit-text-stroke:0;border-left:1px solid #f5977a"><b style="display:inline-block;font-weight:inherit;transform:scaleX(1.05);letter-spacing:0.52px;margin-right:-0.52px;">Title</b></span><span class="abs" style="left:532.600px;width:143.700px;height:28px;text-align:center;border-left:1px solid #f5977a"><b style="display:inline-block;font-weight:inherit;transform:scaleX(1.12);letter-spacing:0.74px;margin-right:-0.74px;">Artist</b></span><span class="abs" style="left:676.300px;width:65px;height:28px;text-align:center;border-left:1px solid #f5977a"><b style="display:inline-block;font-weight:inherit;transform:scaleX(1.12);letter-spacing:0.71px;margin-right:-0.71px;">Intro</b></span><span class="abs" style="left:740.400px;width:92.600px;height:28px;text-align:center;border-left:1px solid #f5977a"><b style="display:inline-block;font-weight:inherit;transform:scaleX(1.1);letter-spacing:0.61px;margin-right:-0.61px;">Duration</b></span></div>
<div class="row" style="top:380px;background:#555"><span style="left:16px"><b style="display:inline-block;font-weight:inherit;transform-origin:0 50%;transform:scaleX(1.1);letter-spacing:0px">1</b></span><span style="left:54.500px"><b style="display:inline-block;font-weight:inherit;transform-origin:0 50%;transform:scaleX(1.1);letter-spacing:0.33px">Hithawathi</b></span><span style="left:538.900px"><b style="display:inline-block;font-weight:inherit;transform-origin:0 50%;transform:scaleX(1.04);letter-spacing:0.28px">Dhyan Hewage</b></span><span style="left:686.500px"><b style="display:inline-block;font-weight:inherit;transform-origin:0 50%;transform:scaleX(1.18);letter-spacing:0.45px">00:40</b></span><span style="left:755.400px"><b style="display:inline-block;font-weight:inherit;transform-origin:0 50%;transform:scaleX(1.16);letter-spacing:0.54px">00:04:40</b></span></div>
<div class="row" style="top:410px;background:#333"><span style="left:16px"><b style="display:inline-block;font-weight:inherit;transform-origin:0 50%;transform:scaleX(1.1);letter-spacing:0px">2</b></span><span style="left:54.500px"><b style="display:inline-block;font-weight:inherit;transform-origin:0 50%;transform:scaleX(1.1);letter-spacing:0.33px">Hithawathi</b></span><span style="left:538.900px"><b style="display:inline-block;font-weight:inherit;transform-origin:0 50%;transform:scaleX(1.04);letter-spacing:0.28px">Dhyan Hewage</b></span><span style="left:686.500px"><b style="display:inline-block;font-weight:inherit;transform-origin:0 50%;transform:scaleX(1.18);letter-spacing:0.45px">00:40</b></span><span style="left:755.400px"><b style="display:inline-block;font-weight:inherit;transform-origin:0 50%;transform:scaleX(1.16);letter-spacing:0.54px">00:04:40</b></span></div>
<div class="row" style="top:440px;background:#555"><span style="left:16px"><b style="display:inline-block;font-weight:inherit;transform-origin:0 50%;transform:scaleX(1.1);letter-spacing:0px">3</b></span><span style="left:54.500px"><b style="display:inline-block;font-weight:inherit;transform-origin:0 50%;transform:scaleX(1.1);letter-spacing:0.33px">Hithawathi</b></span><span style="left:538.900px"><b style="display:inline-block;font-weight:inherit;transform-origin:0 50%;transform:scaleX(1.04);letter-spacing:0.28px">Dhyan Hewage</b></span><span style="left:686.500px"><b style="display:inline-block;font-weight:inherit;transform-origin:0 50%;transform:scaleX(1.18);letter-spacing:0.45px">00:40</b></span><span style="left:755.400px"><b style="display:inline-block;font-weight:inherit;transform-origin:0 50%;transform:scaleX(1.16);letter-spacing:0.54px">00:04:40</b></span></div>
<div class="row" style="top:470px;background:#555"><span style="left:16px"><b style="display:inline-block;font-weight:inherit;transform-origin:0 50%;transform:scaleX(1.1);letter-spacing:0px">3</b></span><span style="left:54.500px"><b style="display:inline-block;font-weight:inherit;transform-origin:0 50%;transform:scaleX(1.1);letter-spacing:0.33px">Hithawathi</b></span><span style="left:538.900px"><b style="display:inline-block;font-weight:inherit;transform-origin:0 50%;transform:scaleX(1.04);letter-spacing:0.28px">Dhyan Hewage</b></span><span style="left:686.500px"><b style="display:inline-block;font-weight:inherit;transform-origin:0 50%;transform:scaleX(1.18);letter-spacing:0.45px">00:40</b></span><span style="left:755.400px"><b style="display:inline-block;font-weight:inherit;transform-origin:0 50%;transform:scaleX(1.16);letter-spacing:0.54px">00:04:40</b></span></div>
<div class="row" style="top:500px;background:#555"><span style="left:16px"><b style="display:inline-block;font-weight:inherit;transform-origin:0 50%;transform:scaleX(1.1);letter-spacing:0px">3</b></span><span style="left:54.500px"><b style="display:inline-block;font-weight:inherit;transform-origin:0 50%;transform:scaleX(1.1);letter-spacing:0.33px">Hithawathi</b></span><span style="left:538.900px"><b style="display:inline-block;font-weight:inherit;transform-origin:0 50%;transform:scaleX(1.04);letter-spacing:0.28px">Dhyan Hewage</b></span><span style="left:686.500px"><b style="display:inline-block;font-weight:inherit;transform-origin:0 50%;transform:scaleX(1.18);letter-spacing:0.45px">00:40</b></span><span style="left:755.400px"><b style="display:inline-block;font-weight:inherit;transform-origin:0 50%;transform:scaleX(1.16);letter-spacing:0.54px">00:04:40</b></span></div>
<div class="row" style="top:530px;background:#555"><span style="left:16px"><b style="display:inline-block;font-weight:inherit;transform-origin:0 50%;transform:scaleX(1.1);letter-spacing:0px">3</b></span><span style="left:54.500px"><b style="display:inline-block;font-weight:inherit;transform-origin:0 50%;transform:scaleX(1.1);letter-spacing:0.33px">Hithawathi</b></span><span style="left:538.900px"><b style="display:inline-block;font-weight:inherit;transform-origin:0 50%;transform:scaleX(1.04);letter-spacing:0.28px">Dhyan Hewage</b></span><span style="left:686.500px"><b style="display:inline-block;font-weight:inherit;transform-origin:0 50%;transform:scaleX(1.18);letter-spacing:0.45px">00:40</b></span><span style="left:755.400px"><b style="display:inline-block;font-weight:inherit;transform-origin:0 50%;transform:scaleX(1.16);letter-spacing:0.54px">00:04:40</b></span></div>
<div class="row" style="top:560px;background:#555"><span style="left:16px"><b style="display:inline-block;font-weight:inherit;transform-origin:0 50%;transform:scaleX(1.1);letter-spacing:0px">3</b></span><span style="left:54.500px"><b style="display:inline-block;font-weight:inherit;transform-origin:0 50%;transform:scaleX(1.1);letter-spacing:0.33px">Hithawathi</b></span><span style="left:538.900px"><b style="display:inline-block;font-weight:inherit;transform-origin:0 50%;transform:scaleX(1.04);letter-spacing:0.28px">Dhyan Hewage</b></span><span style="left:686.500px"><b style="display:inline-block;font-weight:inherit;transform-origin:0 50%;transform:scaleX(1.18);letter-spacing:0.45px">00:40</b></span><span style="left:755.400px"><b style="display:inline-block;font-weight:inherit;transform-origin:0 50%;transform:scaleX(1.16);letter-spacing:0.54px">00:04:40</b></span></div>
<div class="row" style="top:590px;background:#555"><span style="left:16px"><b style="display:inline-block;font-weight:inherit;transform-origin:0 50%;transform:scaleX(1.1);letter-spacing:0px">3</b></span><span style="left:54.500px"><b style="display:inline-block;font-weight:inherit;transform-origin:0 50%;transform:scaleX(1.1);letter-spacing:0.33px">Hithawathi</b></span><span style="left:538.900px"><b style="display:inline-block;font-weight:inherit;transform-origin:0 50%;transform:scaleX(1.04);letter-spacing:0.28px">Dhyan Hewage</b></span><span style="left:686.500px"><b style="display:inline-block;font-weight:inherit;transform-origin:0 50%;transform:scaleX(1.18);letter-spacing:0.45px">00:40</b></span><span style="left:755.400px"><b style="display:inline-block;font-weight:inherit;transform-origin:0 50%;transform:scaleX(1.16);letter-spacing:0.54px">00:04:40</b></span></div>
<div class="row" style="top:620px;background:#555"><span style="left:16px"><b style="display:inline-block;font-weight:inherit;transform-origin:0 50%;transform:scaleX(1.1);letter-spacing:0px">3</b></span><span style="left:54.500px"><b style="display:inline-block;font-weight:inherit;transform-origin:0 50%;transform:scaleX(1.1);letter-spacing:0.33px">Hithawathi</b></span><span style="left:538.900px"><b style="display:inline-block;font-weight:inherit;transform-origin:0 50%;transform:scaleX(1.04);letter-spacing:0.28px">Dhyan Hewage</b></span><span style="left:686.500px"><b style="display:inline-block;font-weight:inherit;transform-origin:0 50%;transform:scaleX(1.18);letter-spacing:0.45px">00:40</b></span><span style="left:755.400px"><b style="display:inline-block;font-weight:inherit;transform-origin:0 50%;transform:scaleX(1.16);letter-spacing:0.54px">00:04:40</b></span></div>
<div class="row" style="top:650px;background:#555"><span style="left:16px"><b style="display:inline-block;font-weight:inherit;transform-origin:0 50%;transform:scaleX(1.1);letter-spacing:0px">3</b></span><span style="left:54.500px"><b style="display:inline-block;font-weight:inherit;transform-origin:0 50%;transform:scaleX(1.1);letter-spacing:0.33px">Hithawathi</b></span><span style="left:538.900px"><b style="display:inline-block;font-weight:inherit;transform-origin:0 50%;transform:scaleX(1.04);letter-spacing:0.28px">Dhyan Hewage</b></span><span style="left:686.500px"><b style="display:inline-block;font-weight:inherit;transform-origin:0 50%;transform:scaleX(1.18);letter-spacing:0.45px">00:40</b></span><span style="left:755.400px"><b style="display:inline-block;font-weight:inherit;transform-origin:0 50%;transform:scaleX(1.16);letter-spacing:0.54px">00:04:40</b></span></div>
<div class="row" style="top:680px;background:#555"><span style="left:16px"><b style="display:inline-block;font-weight:inherit;transform-origin:0 50%;transform:scaleX(1.1);letter-spacing:0px">3</b></span><span style="left:54.500px"><b style="display:inline-block;font-weight:inherit;transform-origin:0 50%;transform:scaleX(1.1);letter-spacing:0.33px">Hithawathi</b></span><span style="left:538.900px"><b style="display:inline-block;font-weight:inherit;transform-origin:0 50%;transform:scaleX(1.04);letter-spacing:0.28px">Dhyan Hewage</b></span><span style="left:686.500px"><b style="display:inline-block;font-weight:inherit;transform-origin:0 50%;transform:scaleX(1.18);letter-spacing:0.45px">00:40</b></span><span style="left:755.400px"><b style="display:inline-block;font-weight:inherit;transform-origin:0 50%;transform:scaleX(1.16);letter-spacing:0.54px">00:04:40</b></span></div>
<div class="row" style="top:710px;background:#555"><span style="left:16px"><b style="display:inline-block;font-weight:inherit;transform-origin:0 50%;transform:scaleX(1.1);letter-spacing:0px">3</b></span><span style="left:54.500px"><b style="display:inline-block;font-weight:inherit;transform-origin:0 50%;transform:scaleX(1.1);letter-spacing:0.33px">Hithawathi</b></span><span style="left:538.900px"><b style="display:inline-block;font-weight:inherit;transform-origin:0 50%;transform:scaleX(1.04);letter-spacing:0.28px">Dhyan Hewage</b></span><span style="left:686.500px"><b style="display:inline-block;font-weight:inherit;transform-origin:0 50%;transform:scaleX(1.18);letter-spacing:0.45px">00:40</b></span><span style="left:755.400px"><b style="display:inline-block;font-weight:inherit;transform-origin:0 50%;transform:scaleX(1.16);letter-spacing:0.54px">00:04:40</b></span></div>
<div class="row" style="top:740px;background:#555"><span style="left:16px"><b style="display:inline-block;font-weight:inherit;transform-origin:0 50%;transform:scaleX(1.1);letter-spacing:0px">3</b></span><span style="left:54.500px"><b style="display:inline-block;font-weight:inherit;transform-origin:0 50%;transform:scaleX(1.1);letter-spacing:0.33px">Hithawathi</b></span><span style="left:538.900px"><b style="display:inline-block;font-weight:inherit;transform-origin:0 50%;transform:scaleX(1.04);letter-spacing:0.28px">Dhyan Hewage</b></span><span style="left:686.500px"><b style="display:inline-block;font-weight:inherit;transform-origin:0 50%;transform:scaleX(1.18);letter-spacing:0.45px">00:40</b></span><span style="left:755.400px"><b style="display:inline-block;font-weight:inherit;transform-origin:0 50%;transform:scaleX(1.16);letter-spacing:0.54px">00:04:40</b></span></div>
<div class="pb" style="left:684.4px;width:35.2px"><svg class="abs" style="left:0;top:0" width="35.2" height="35" viewBox="684.4 781 35.2 35"><path d="M702 790.600v16.300M693.850 798.750h16.300" stroke="#3cb043" stroke-width="3.300" stroke-linecap="round"/></svg></div>
<div class="pb" style="left:725.5px;width:35px"><svg class="abs" style="left:0;top:0" width="35" height="35" viewBox="725.5 781 35 35"><path d="M747.600 789.200l-9.500 9.500 9.500 9.500" fill="none" stroke="#fff" stroke-width="1.700" stroke-linecap="square" stroke-linejoin="miter"/></svg></div>
<div class="pb" style="left:766.6px;width:35.7px"><svg class="abs" style="left:0;top:0" width="35.7" height="35" viewBox="766.6 781 35.7 35"><path d="M784.700 789.900l-8.800 8.850 8.800 8.850M793.400 789.900l-8.700 8.850 8.700 8.850" fill="none" stroke="#fff" stroke-width="2.800" stroke-linecap="round" stroke-linejoin="round"/></svg></div>
<div class="pb" style="left:1106.4px;width:36px"><svg class="abs" style="left:0;top:0" width="36" height="35" viewBox="1106.4 781 36 35"><path d="M1115.600 789.900l8.800 8.850-8.800 8.850M1124.300 789.900l8.700 8.850-8.700 8.850" fill="none" stroke="#fff" stroke-width="2.800" stroke-linecap="round" stroke-linejoin="round"/></svg></div>
<div class="pb" style="left:1148.3px;width:35.1px"><svg class="abs" style="left:0;top:0" width="35.1" height="35" viewBox="1148.3 781 35.1 35"><path d="M1161 789.200l9.500 9.500-9.500 9.500" fill="none" stroke="#fff" stroke-width="1.700" stroke-linecap="square" stroke-linejoin="miter"/></svg></div>
<div class="pb" style="left:1189.4px;width:35.3px"><svg class="abs" style="left:0;top:0" width="35.3" height="35" viewBox="1189.4 781 35.3 35"><rect x="1197.800" y="789" width="18.500" height="19.100" rx="2.700" fill="#d04040"/></svg></div>
<div class="pb" style="left:1230.4px;width:35.3px"><svg class="abs" style="left:0;top:0" width="35.3" height="35" viewBox="1230.4 781 35.3 35"><path d="M1238.600 787.700v21.500l18.600-10.750z" fill="#2a9d3c" stroke="#2a9d3c" stroke-width="4" stroke-linejoin="round"/></svg></div>
<div class="pb" style="left:1271.4px;width:35.2px"><svg class="abs" style="left:0;top:0" width="35.2" height="35" viewBox="1271.4 781 35.2 35"><path d="M1280.200 791.600v14.500l8.300-7.250zM1288.600 791.600v14.500l9.100-7.250z" fill="#fff" stroke="#fff" stroke-width="2" stroke-linejoin="round"/></svg></div>
<div class="abs" style="left:808.400px;top:781px;width:292.100px;height:34.900px;background:#3c3c3c"></div>
<div class="t" style="left:916.50px;top:792.27px;font-size:13.5px;letter-spacing:.56px">1-100 / 155</div>
<div id="ftr"></div>
<svg class="abs" style="left:1347.300px;top:839.500px" width="26.500" height="26.500" viewBox="0 0 27 27" fill="none" stroke="#686868" stroke-width="1.350" stroke-linejoin="round"><path d="M10.67 3.28L11.35 0.98L15.65 0.98L16.33 3.28A3.20 3.20 0 0 0 18.72 4.28L20.83 3.13L23.87 6.17L22.72 8.28A3.20 3.20 0 0 0 23.72 10.67L26.02 11.35L26.02 15.65L23.72 16.33A3.20 3.20 0 0 0 22.72 18.72L23.87 20.83L20.83 23.87L18.72 22.72A3.20 3.20 0 0 0 16.33 23.72L15.65 26.02L11.35 26.02L10.67 23.72A3.20 3.20 0 0 0 8.28 22.72L6.17 23.87L3.13 20.83L4.28 18.72A3.20 3.20 0 0 0 3.28 16.33L0.98 15.65L0.98 11.35L3.28 10.67A3.20 3.20 0 0 0 4.28 8.28L3.13 6.17L6.17 3.13L8.28 4.28A3.20 3.20 0 0 0 10.67 3.28Z"/><circle cx="13.500" cy="13.500" r="7.200"/><path d="M13.300 10.700v.9M12 13.200h1.400v2.600l1.300 1.100" stroke-width="1.100"/></svg>
<svg class="abs" style="left:1387px;top:839px" width="28" height="28" viewBox="1387 839 28 28" fill="none" stroke="#686868" stroke-width="1.400" stroke-linecap="round"><path d="M1388.450 852.400V842.500a2 2 0 0 1 2-2h20.800a2 2 0 0 1 2 2v20.800a2 2 0 0 1-2 2H1401"/><rect x="1388.450" y="855.400" width="9.900" height="9.900" rx="2"/><path d="M1400.500 853.200l6.800-6.800M1402.900 846.250h4.600v4.300"/></svg>
</div></body></html>
